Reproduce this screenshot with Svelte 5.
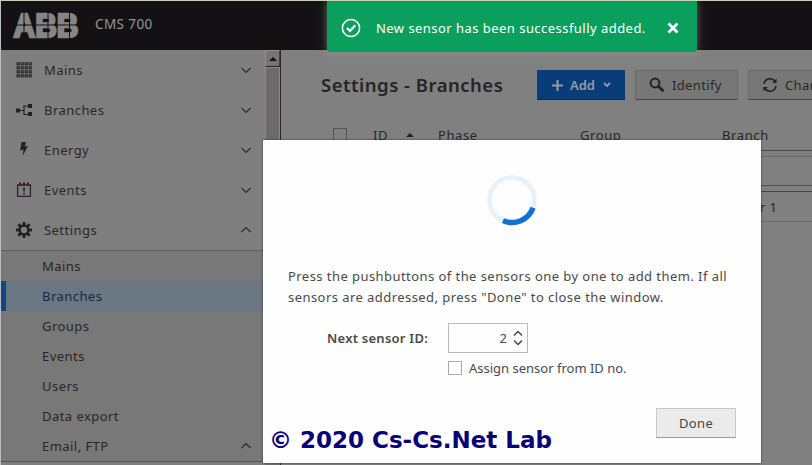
<script>
  const menu = [
    { label: 'Mains', icon: 'grid' },
    { label: 'Branches', icon: 'tree' },
    { label: 'Energy', icon: 'bolt' },
    { label: 'Events', icon: 'event' },
    { label: 'Settings', icon: 'gear', open: true }
  ];
  const sub = ['Mains', 'Branches', 'Groups', 'Events', 'Users', 'Data export', 'Email, FTP'];
  const teeth = [0, 45, 90, 135, 180, 225, 270, 315];
</script>

{#snippet chevron(up)}
  <svg class="chev" width="12" height="8" viewBox="0 0 12 8"><path d={up ? 'M1.5 6 6 1.5 10.5 6' : 'M1.5 2 6 6.5 10.5 2'} /></svg>
{/snippet}

<div class="screen">
  <header>
    <svg class="logo" width="68" height="27" viewBox="0 0 68 27">
      <text x="1.5" y="25.2" textLength="65" lengthAdjust="spacingAndGlyphs">ABB</text>
      <path d="M0 13H68M12 0V27M36 0V27M57.5 0V27" />
    </svg>
    <span class="product">CMS 700</span>
  </header>

  <div class="body">
    <nav>
      {#each menu as m}
        <div class="item">
          <svg class="icon" width="16" height="16" viewBox="0 0 16 16">
            {#if m.icon === 'grid'}
              {#each [0, 4, 8, 12] as y}
                {#each [1, 5, 9, 13] as x}
                  <rect x={x + 0.1} y={y + 0.8} width="2.2" height="2" fill="none" stroke="#262626" stroke-width="1.1" />
                {/each}
              {/each}
            {:else if m.icon === 'tree'}
              <path d="M0 6.5h4v4H0zM12 2h4v4h-4zM12 10h4v4h-4z" fill="#222" />
              <path d="M4 8.5h4M12 4H8v8.5h4" fill="none" stroke="#222" stroke-width="1.2" />
            {:else if m.icon === 'bolt'}
              <path d="M5.5 0H10L8.8 4.5 12 3.8 6.7 14 7.5 7.5 4 8.5z" fill="#222" />
            {:else if m.icon === 'event'}
              <path d="M1.6 2.8h12.8v11.6H1.6zM1.6 3h12.8" fill="none" stroke="#2c202c" stroke-width="1.3" />
              <path d="M3 .5h2v3H3zM7 .5h2v3H7zM11 .5h2v3h-2zM7.2 5.5h1.7v4H7.2zM7.2 10.8h1.7v1.8H7.2z" fill="#321f32" />
            {:else}
              {#each teeth as a}
                <rect x="6.6" y="0" width="2.8" height="4" fill="#222" transform="rotate({a} 8 8)" />
              {/each}
              <circle cx="8" cy="8" r="4.4" fill="none" stroke="#222" stroke-width="2.5" />
            {/if}
          </svg>
          <span>{m.label}</span>
          {@render chevron(m.open)}
        </div>
      {/each}
      <div class="sub">
        {#each sub as s, i}
          <div class="subitem" class:active={i === 1}>
            <span>{s}</span>
            {#if i === 6}{@render chevron(true)}{/if}
          </div>
        {/each}
      </div>
    </nav>
    <div class="scroll"><div class="up"><i></i></div><div class="thumb"></div></div>

    <main>
      <div class="toolbar">
        <h1>Settings - Branches</h1>
        <button class="add">
          <svg width="11" height="11" viewBox="0 0 11 11"><path d="M5.5 0v11M0 5.5h11" stroke="#939ba5" stroke-width="2" /></svg>
          <span>Add</span>
          <svg width="8" height="6" viewBox="0 0 8 6"><path d="M1 1l3 3 3-3" fill="none" stroke="#939ba5" stroke-width="1.8" /></svg>
        </button>
        <button class="identify">
          <svg width="16" height="16" viewBox="0 0 16 16"><circle cx="6" cy="6" r="4.4" fill="none" stroke="#222" stroke-width="2" /><path d="M9 9l5.5 5.3" stroke="#222" stroke-width="2.6" /></svg>
          <span>Identify</span>
        </button>
        <button class="change">
          <svg width="16" height="16" viewBox="0 0 16 16"><path d="M2 6.8A6 6 0 0 1 13 4.6M14 9.2A6 6 0 0 1 3 11.4" fill="none" stroke="#222" stroke-width="1.6" /><path d="M14.6 1.6v4.4h-4.4zM1.4 14.4V10h4.4z" fill="#222" /></svg>
          <span>Change</span>
        </button>
      </div>
      <div class="thead">
        <span class="check"></span>
        <span class="id">ID</span><i class="sort"></i>
        <span class="phase">Phase</span>
        <span class="group">Group</span>
        <span class="branch">Branch</span>
      </div>
      <div class="filter"></div>
      <div class="row"><span>Sensor 1</span></div>
    </main>
  </div>

  <div class="toast">
    <svg width="20" height="20" viewBox="0 0 20 20"><circle cx="10" cy="10" r="8.6" fill="none" stroke="#fff" stroke-width="1.5" /><path d="M6 10l3 3 5.3-5.7" fill="none" stroke="#fff" stroke-width="2.2" /></svg>
    <span>New sensor has been successfully added.</span>
    <svg class="close" width="12" height="12" viewBox="0 0 12 12"><path d="M1.5 1.5l9 9M10.5 1.5l-9 9" stroke="#fff" stroke-width="2.8" /></svg>
  </div>

  <div class="dialog">
    <svg class="spinner" width="52" height="52" viewBox="0 0 52 52">
      <circle cx="26" cy="26" r="22.5" fill="none" stroke="#e6f1fb" stroke-width="4.5" />
      <path d="M47.1 33.8A22.5 22.5 0 0 1 17 46.6" fill="none" stroke="#1170d6" stroke-width="5.4" />
    </svg>
    <p>Press the pushbuttons of the sensors one by one to add them. If all<br />sensors are addressed, press "Done" to close the window.</p>
    <div class="field">
      <label for="sid">Next sensor ID:</label>
      <div class="num" id="sid">
        <span>2</span>
        <svg width="10" height="16" viewBox="0 0 10 16"><path d="M1 5.5l4-4 4 4M1 10.5l4 4 4-4" fill="none" stroke="#444" stroke-width="1.5" /></svg>
      </div>
    </div>
    <div class="assign"><span class="box"></span><span>Assign sensor from ID no.</span></div>
    <button class="done">Done</button>
    <div class="credit">© 2020 Cs-Cs.Net Lab</div>
  </div>
</div>

<style>
  :global(body) { overflow: hidden; }
  * { box-sizing: border-box; }
  .screen {
    position: relative; width: 812px; height: 465px; overflow: hidden;
    border-top: 1px solid #c9d0ae; border-left: 1px solid #b9bfbf;
    background: #808080; color: #272727;
    font: 13px/20px "Noto Sans", sans-serif; white-space: nowrap;
    display: flex; flex-direction: column;
  }
  header { height: 49px; flex: none; background: #131113; display: flex; padding: 11px 0 0 11px; }
  .logo { overflow: visible; }
  .logo text { font: bold 33px "Liberation Sans", sans-serif; fill: #858585; stroke: #858585; stroke-width: 2.4; }
  .logo path { stroke: #131113; stroke-width: 1; }
  .product { margin: 2px 0 0 15px; color: #969696; font-size: 13.5px; letter-spacing: .4px; }
  .body { display: flex; flex: 1; min-height: 0; }
  nav { width: 264px; flex: none; background: #7f7f7f; }
  .item { height: 40px; display: flex; align-items: center; padding: 0 13px 0 15px; letter-spacing: .45px; }
  .item span { margin-left: 12px; flex: 1; }
  .chev { fill: none; stroke: #2c2c2c; stroke-width: 1.2; }
  .sub { height: 212px; border-top: 1px solid #5e5e5e; border-bottom: 1px solid #555; background: #787878; letter-spacing: .45px; }
  .subitem { height: 30px; display: flex; align-items: center; justify-content: space-between; padding: 0 13px 0 41px; }
  .active { background: #6a7782; color: #14294f; border-left: 5px solid #0e468b; padding-left: 36px; }
  .scroll { width: 16px; flex: none; background: #717171; border-right: 1px solid #292929; }
  .up { height: 17px; background: #777572; border: 1px solid #909090; border-bottom-color: #222; border-right-color: #444; display: flex; align-items: center; justify-content: center; }
  .up i { border: 4px solid transparent; border-top: 0; border-bottom: 4px solid #111; }
  .thumb { height: 394px; background: #6d6b68; border: 1px solid #888; }
  main { flex: 1; min-width: 0; }
  .toolbar { display: flex; padding: 20px 0 0 40px; height: 77px; align-items: flex-start; }
  h1 { margin: 1px 0 0; width: 216px; flex: none; font: 600 18.5px/28px "Noto Sans", sans-serif; color: #252525; letter-spacing: .5px; }
  button { font: 13px/20px "Noto Sans", sans-serif; color: #272727; height: 30px; padding: 0; border: 1px solid #686868; border-bottom-color: #484848; background: #777; display: flex; align-items: center; flex: none; letter-spacing: .35px; }
  .add { width: 88px; background: #083d79; border-color: #083d79; border-bottom-color: #052a55; color: #969ca4; font-weight: 600; padding-left: 14px; letter-spacing: 0; }
  .add span { margin: 0 8px 0 7px; }
  .identify { width: 103px; margin: 0 10px; padding-left: 13px; }
  .identify span { margin-left: 7px; }
  .change { width: 100px; padding-left: 13px; }
  .change span { margin-left: 7px; }
  .thead { height: 24px; display: flex; align-items: center; padding: 0 0 8px 52px; line-height: 20px; border-bottom: 1px solid #4b4b4b; letter-spacing: .6px; }
  .check { width: 14px; height: 14px; border: 1px solid #555; margin-right: 26px; flex: none; }
  .id { width: 33px; }
  .sort { border: 4px solid transparent; border-top: 0; border-bottom-color: #222; margin-right: 24px; }
  .phase { width: 142px; }
  .group { width: 142px; }
  .filter { margin-top: 5px; border-top: 1px solid #666; border-bottom: 1px solid #505050; height: 30px; }
  .row { margin-top: 5px; height: 31px; border-top: 1px solid #444; border-bottom: 1px solid #686868; padding: 5px 0 0 441px; letter-spacing: .3px; }
  .toast {
    position: absolute; left: 326px; top: 0; width: 370px; height: 51px; background: #0a9f5d; border-radius: 0 0 3px 3px;
    color: #fff; display: flex; align-items: center; padding: 2px 18px 0 14px; box-shadow: 0 0 9px rgba(170,170,170,.55); letter-spacing: .46px;
  }
  .toast span { margin-left: 15px; flex: 1; }
  .dialog {
    position: absolute; left: 262px; top: 139px; width: 498px; height: 323px; background: #fdfefd; color: #4a4a4a;
    box-shadow: 0 0 2px #333; display: flex; flex-direction: column;
  }
  .spinner { margin: 34px 0 0 223px; flex: none; }
  p { margin: 40px 0 0 25px; line-height: 21px; letter-spacing: .44px; }
  .field { display: flex; align-items: center; margin: 15px 0 0 64px; }
  label { width: 121px; font-weight: 600; letter-spacing: .25px; }
  .num { width: 80px; height: 30px; border: 1px solid #bbb; display: flex; align-items: center; justify-content: flex-end; padding-right: 4px; }
  .num svg { margin-left: 6px; }
  .assign { display: flex; align-items: center; margin: 5px 0 0 185px; height: 20px; }
  .box { width: 14px; height: 14px; border: 1px solid #aaa; margin-right: 7px; }
  .done { width: 80px; margin: 30px 0 0 393px; justify-content: center; color: #444; background: #ebebeb; border-color: #c8c8c8; border-bottom-color: #999; flex: none; }
  .credit { font: bold 23px/26px "DejaVu Sans", sans-serif; color: #070078; margin: -11px 0 0 6px; }
</style>
